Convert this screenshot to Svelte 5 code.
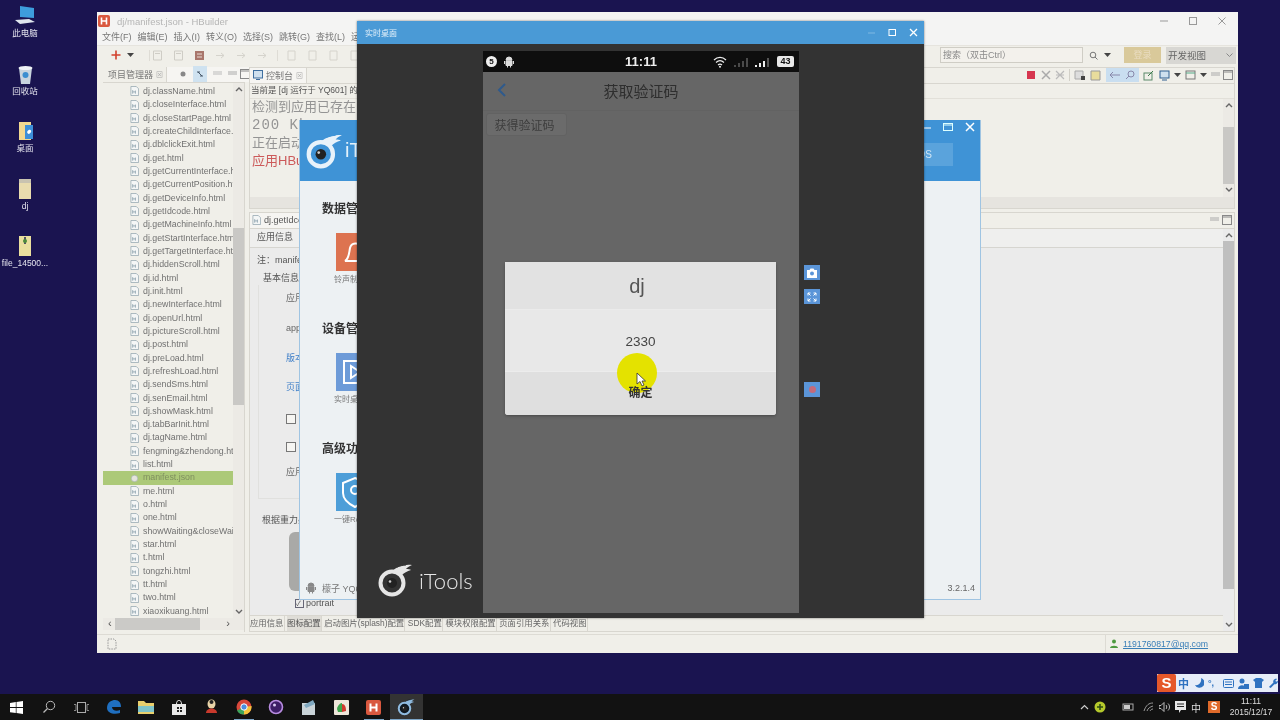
<script>
	const shortcuts = [
		{ label: '此电脑', kind: 'pc' },
		{ label: '回收站', kind: 'bin' },
		{ label: '桌面', kind: 'desk' },
		{ label: 'dj', kind: 'folder' },
		{ label: 'file_14500...', kind: 'zip' }
	];

	const files = [
		'dj.className.html', 'dj.closeInterface.html', 'dj.closeStartPage.html', 'dj.createChildInterface.html',
		'dj.dblclickExit.html', 'dj.get.html', 'dj.getCurrentInterface.html', 'dj.getCurrentPosition.html',
		'dj.getDeviceInfo.html', 'dj.getIdcode.html', 'dj.getMachineInfo.html', 'dj.getStartInterface.html',
		'dj.getTargetInterface.html', 'dj.hiddenScroll.html', 'dj.id.html', 'dj.init.html',
		'dj.newInterface.html', 'dj.openUrl.html', 'dj.pictureScroll.html', 'dj.post.html',
		'dj.preLoad.html', 'dj.refreshLoad.html', 'dj.sendSms.html', 'dj.senEmail.html',
		'dj.showMask.html', 'dj.tabBarInit.html', 'dj.tagName.html', 'fengming&zhendong.html',
		'list.html', 'manifest.json', 'me.html', 'o.html', 'one.html', 'showWaiting&closeWaiting.html',
		'star.html', 't.html', 'tongzhi.html', 'tt.html', 'two.html', 'xiaoxikuang.html'
	];

	const menus = ['文件(F)', '编辑(E)', '插入(I)', '转义(O)', '选择(S)', '跳转(G)', '查找(L)', '运行(R)'];
	const bottomTabs = ['应用信息', '图标配置', '启动图片(splash)配置', 'SDK配置', '模块权限配置', '页面引用关系', '代码视图'];
	const sections = [
		{ title: '数据管理', caption: '铃声制作', kind: 'bell' },
		{ title: '设备管理', caption: '实时桌面', kind: 'play' },
		{ title: '高级功能', caption: '一键Root', kind: 'shield' }
	];
</script>

{#snippet fileIcon(json)}
	<svg class="file-icon" viewBox="0 0 10 11">
		{#if json}
			<circle cx="5" cy="6" r="3.6" fill="#e4e4dc" stroke="#9aa" stroke-width=".6" />
		{:else}
			<path d="M1 .5h6l2.500 2.500v7.500h-8.500z" fill="#f4f6f6" stroke="#8fa3ad" stroke-width=".8" />
			<path d="M3 4.500v4M3 6.500h3M6 5v3.500" stroke="#7f97a5" stroke-width=".8" fill="none" />
		{/if}
	</svg>
{/snippet}

{#snippet logo(size, ring, iris)}
	<svg width={size} height={size} viewBox="0 0 36 36">
		<circle cx="15" cy="21" r="11.500" fill={iris} stroke={ring} stroke-width="4" />
		<circle cx="15" cy="21" r="5" fill="#222" />
		<circle cx="13" cy="19.500" r="1.300" fill="#ccc" />
		<path d="M15 9c6-5 13-7 20-6-3 1-5 3-6 4 2 0 4 0 5 1-4 1-7 3-9 5-2-2-6-4-10-4z" fill={ring} />
		<path d="M20 5c3-1 6-2 9-2" stroke={iris} stroke-width="1" fill="none" />
	</svg>
{/snippet}

{#snippet scrollV(thumbClass)}
	<div class="scroll-v">
		<svg class="arrow" viewBox="0 0 8 6"><path d="M1 5l3-3 3 3" fill="none" stroke="#666" stroke-width="1.400" /></svg>
		<div class="track"><div class="thumb {thumbClass}"></div></div>
		<svg class="arrow" viewBox="0 0 8 6"><path d="M1 1l3 3 3-3" fill="none" stroke="#666" stroke-width="1.400" /></svg>
	</div>
{/snippet}

{#snippet viewButtons()}
	<span class="view-buttons">
		<svg width="9" height="6" viewBox="0 0 9 6"><path d="M0 1h9M0 3h9" stroke="#aaa" /></svg>
		<svg width="10" height="10" viewBox="0 0 10 10"><rect x=".5" y=".5" width="9" height="9" fill="none" stroke="#888" /><path d="M0 2h10" stroke="#888" /></svg>
	</span>
{/snippet}

<div class="screen">
	<div class="shortcuts">
		{#each shortcuts as item}
			<div class="shortcut">
				<svg width="24" height="22" viewBox="0 0 24 22">
					{#if item.kind === 'pc'}
						<path d="M7 1l14 2v10l-14-1z" fill="#3d9ddc" />
						<path d="M2 15l14-1 6 3-15 2z" fill="#dfe6ee" />
					{:else if item.kind === 'bin'}
						<path d="M6 5h13l-2 16h-9z" fill="#c8d4de" />
						<ellipse cx="12.500" cy="5" rx="7" ry="2" fill="#eef2f5" />
						<circle cx="12.500" cy="12" r="3" fill="#3b8ed0" />
					{:else if item.kind === 'desk'}
						<path d="M6 2h12v18h-12z" fill="#f2d890" />
						<path d="M12 5h8v14h-8z" fill="#3d8fd8" />
						<path d="M14 12c2-4 5-2 4 0s-3 3-4 0z" fill="#fff" />
					{:else if item.kind === 'folder'}
						<path d="M6 1h12v20h-12z" fill="#e9dcae" />
						<path d="M6 1h12v4h-12z" fill="#c9c3b0" />
					{:else}
						<path d="M6 1h12v20h-12z" fill="#eadf9e" />
						<path d="M11 2h2v7h-2z" fill="#556" />
						<circle cx="12" cy="6" r="2" fill="#4c8a3c" />
					{/if}
				</svg>
				<span>{item.label}</span>
			</div>
		{/each}
	</div>

	<div class="window hbuilder">
		<div class="hb-title">
			<svg width="12" height="12" viewBox="0 0 12 12"><rect width="12" height="12" rx="2" fill="#d9583f" /><path d="M3.500 2.500v7M8.500 2.500v7M3.500 6h5" stroke="#fff" stroke-width="1.600" /></svg>
			<span class="hb-name">dj/manifest.json - HBuilder</span>
			<span class="controls">
				<svg width="10" height="10" viewBox="0 0 10 10"><path d="M1 5h8" stroke="#999" /></svg>
				<svg width="10" height="10" viewBox="0 0 10 10"><rect x="1.500" y="1.500" width="7" height="7" fill="none" stroke="#999" /></svg>
				<svg width="10" height="10" viewBox="0 0 10 10"><path d="M1.500 1.500l7 7M8.500 1.500l-7 7" stroke="#999" /></svg>
			</span>
		</div>

		<div class="hb-menu">
			{#each menus as m}<span>{m}</span>{/each}
		</div>

		<div class="hb-tools">
			<svg class="plus" width="10" height="10" viewBox="0 0 10 10"><path d="M5 .5v9M.5 5h9" stroke="#d2402c" stroke-width="1.600" /></svg>
			<svg class="caret" width="7" height="4" viewBox="0 0 7 4"><path d="M0 0h7l-3.500 4z" fill="#444" /></svg>
			<span class="tool-group">
				{#each [0, 1, 3, 4, 5, 6] as n}
					<svg width="11" height="11" viewBox="0 0 11 11">
						{#if n < 2}
							<path d="M1.500 1h8v9h-8zM3 3.500h5" fill="none" stroke="#cfcdc6" />
						{:else if n === 3}
							<rect x="1" y="1" width="9" height="9" fill="#a9766c" /><path d="M3 4h5M3 7h5" stroke="#e8dcd4" />
						{:else}
							<path d="M1 5.500h8M6 3l3 2.500-3 2.500" fill="none" stroke="#d5d3cc" />
						{/if}
					</svg>
				{/each}
			</span>
			<span class="tool-group second">
				{#each [0, 1, 2, 3] as n}
					<svg width="11" height="11" viewBox="0 0 11 11"><path d="M2 1h7v9h-7z" fill="none" stroke="#d5d3cc" /></svg>
				{/each}
			</span>
			<span class="search-box">搜索（双击Ctrl）</span>
			<svg class="q" width="9" height="9" viewBox="0 0 9 9"><circle cx="4" cy="4" r="2.800" fill="none" stroke="#777" /><path d="M6 6l2.500 2.500" stroke="#777" /></svg>
			<svg class="caret" width="7" height="4" viewBox="0 0 7 4"><path d="M0 0h7l-3.500 4z" fill="#444" /></svg>
			<span class="login">登录</span>
			<span class="view-select">开发视图
				<svg width="7" height="4" viewBox="0 0 7 4"><path d="M.5.500l3 3 3-3" fill="none" stroke="#888" /></svg>
			</span>
		</div>

		<div class="workspace">
			<aside class="project">
				<div class="tab-row">
					<span class="tab-name">项目管理器 <small>⊠</small></span>
					<span class="tab-rest">
						<svg width="8" height="8" viewBox="0 0 8 8"><circle cx="4" cy="4" r="2.500" fill="#888" /></svg>
						<span class="linked"><svg width="8" height="6" viewBox="0 0 8 6"><path d="M1 1h3M4 5h3M2 1l4 4" stroke="#456" /></svg></span>
						<svg width="9" height="6" viewBox="0 0 9 6"><path d="M0 1h9M0 3h9" stroke="#bbb" /></svg>
						{@render viewButtons()}
					</span>
				</div>
				<div class="tree-wrap">
					<ul class="tree">
						{#each files as f}
							<li class:selected={f === 'manifest.json'}>
								{@render fileIcon(f === 'manifest.json')}
								<span>{f}</span>
							</li>
						{/each}
					</ul>
					{@render scrollV('tree-thumb')}
				</div>
				<div class="scroll-h">
					<span>‹</span>
					<div class="h-thumb"></div>
					<span>›</span>
				</div>
			</aside>

			<section class="center">
				<div class="panel console">
					<div class="tab-row">
						<span class="tab-name console-tab">
							<svg width="10" height="10" viewBox="0 0 10 10"><rect x=".5" y=".5" width="9" height="7.500" fill="#cfe0ee" stroke="#3f6f9f" /><path d="M3 9.500h4" stroke="#3f6f9f" /></svg>
							控制台 <small>⊠</small>
						</span>
						<span class="console-tools">
							<i class="stop"></i>
							<svg width="10" height="10" viewBox="0 0 10 10"><path d="M1 1l8 8M9 1l-8 8" stroke="#aaa" stroke-width="1.500" /></svg>
							<svg width="10" height="10" viewBox="0 0 10 10"><path d="M1 1l8 8M9 1l-8 8M1 5h8" stroke="#bbb" stroke-width="1.200" /></svg>
							<b></b>
							<svg width="12" height="11" viewBox="0 0 12 11"><path d="M1 1h8v8h-8z" fill="#ddd" stroke="#aaa" /><rect x="7" y="6" width="4" height="4" fill="#444" /></svg>
							<svg width="12" height="11" viewBox="0 0 12 11"><path d="M1 1h9v9h-9z" fill="#e8dc9c" stroke="#999" /></svg>
							<span class="toggled">
								<svg width="12" height="10" viewBox="0 0 12 10"><path d="M1 5h10M4 2l-3 3 3 3" fill="none" stroke="#88a" /></svg>
								<svg width="12" height="10" viewBox="0 0 12 10"><circle cx="7" cy="4" r="3" fill="none" stroke="#88a" /><path d="M2 9l3-3" stroke="#88a" /></svg>
							</span>
							<svg width="12" height="11" viewBox="0 0 12 11"><rect x="1" y="3" width="8" height="7" fill="none" stroke="#5a8a6a" /><path d="M5 6l5-5" stroke="#3a7a4a" /></svg>
							<svg width="11" height="11" viewBox="0 0 11 11"><rect x="1" y="1" width="9" height="7" fill="#cfe0ee" stroke="#2f5f8f" /><path d="M3 10h5" stroke="#2f5f8f" /></svg>
							<svg width="7" height="4" viewBox="0 0 7 4"><path d="M0 0h7l-3.500 4z" fill="#444" /></svg>
							<svg width="11" height="10" viewBox="0 0 11 10"><rect x="1" y="1" width="9" height="8" fill="none" stroke="#777" /><path d="M1 3h9" stroke="#5a8" /></svg>
							<svg width="7" height="4" viewBox="0 0 7 4"><path d="M0 0h7l-3.500 4z" fill="#444" /></svg>
							{@render viewButtons()}
						</span>
					</div>
					<div class="console-info">当前是 [dj 运行于 YQ601] 的手机端日志输出</div>
					<div class="console-main">
						<div class="console-lines">
							<p>检测到应用已存在，覆盖安装</p>
							<p class="mono">200 Kb</p>
							<p>正在启动应用</p>
							<p class="red">应用HBuilder已启动</p>
						</div>
						{@render scrollV('console-thumb')}
					</div>
					<div class="console-hbar"></div>
				</div>

				<div class="panel editor">
					<div class="tab-row editor-tabs">
						<span class="tab-name editor-tab">{@render fileIcon(false)} dj.getIdcode.html</span>
						<span class="tab-end">{@render viewButtons()}</span>
					</div>
					<div class="editor-main">
						<div class="form">
							<div class="form-head">应用信息</div>
							<div class="form-note">注：manifest.json 文件</div>
							<div class="legend">基本信息</div>
							<div class="fieldset">
								<span>应用名称</span>
								<span>appid</span>
								<span class="link">版本号</span>
								<span class="link">页面入口</span>
								<span class="check"><i></i>全屏</span>
								<span class="check"><i></i>延迟</span>
								<span>应用描述</span>
							</div>
							<div class="gravity">根据重力感应</div>
							<div class="phone-mock"></div>
							<div class="portrait"><i>✓</i>portrait</div>
							<div class="form-tabs">
								{#each bottomTabs as t, i}
									<span class:active={i === 1}>{t}</span>
								{/each}
							</div>
						</div>
						{@render scrollV('editor-thumb')}
					</div>
				</div>
			</section>
		</div>

		<div class="hb-status">
			<svg width="10" height="12" viewBox="0 0 10 12"><path d="M1 1h6l2 2v8h-8z" fill="none" stroke="#999" stroke-dasharray="1.500 1" /></svg>
			<span class="account">
				<svg width="8" height="9" viewBox="0 0 8 9"><circle cx="4" cy="2.500" r="2" fill="#4d9a3f" /><path d="M0 9c0-3 8-3 8 0z" fill="#4d9a3f" /></svg>
				<u>1191760817@qq.com</u>
			</span>
		</div>
	</div>

	<div class="window itools">
		<header class="it-head">
			{@render logo(38, '#e8f2fa', '#3d92d6')}
			<span class="it-word">iTools</span>
			<span class="it-btn">iOS</span>
			<span class="it-controls">
				<svg width="10" height="10" viewBox="0 0 10 10"><path d="M0 6h10" stroke="#fff" /></svg>
				<svg width="10" height="10" viewBox="0 0 10 10"><rect x=".5" y="1.500" width="9" height="7" fill="none" stroke="#dff" /><path d="M0 3h10" stroke="#dff" /></svg>
				<svg width="10" height="10" viewBox="0 0 10 10"><path d="M1 1l8 8M9 1l-8 8" stroke="#fff" stroke-width="1.500" /></svg>
			</span>
		</header>
		<div class="it-body">
			{#each sections as s}
				<section class="it-section">
					<h3>{s.title}</h3>
					<div class="it-tile {s.kind}">
						<svg width="38" height="38" viewBox="0 0 38 38">
							{#if s.kind === 'bell'}
								<path d="M9 28c4-2 4-8 5-13s9-7 12 0 1 11 5 13z" fill="none" stroke="#fff" stroke-width="2" />
							{:else if s.kind === 'play'}
								<rect x="8" y="8" width="24" height="22" fill="none" stroke="#fff" stroke-width="2" />
								<path d="M15 13l9 6-9 6z" fill="none" stroke="#fff" stroke-width="2" />
							{:else}
								<path d="M19 5l12 5v10c0 7-6 11-12 14-6-3-12-7-12-14v-10z" fill="none" stroke="#fff" stroke-width="2" />
								<circle cx="19" cy="17" r="4" fill="none" stroke="#fff" stroke-width="2" />
							{/if}
						</svg>
					</div>
					<p>{s.caption}</p>
				</section>
			{/each}
		</div>
		<footer class="it-foot">
			<svg width="12" height="12" viewBox="0 0 12 12"><path d="M3 4a3 3 0 0 1 6 0zM3 4.800h6v4.700h-6zM1.500 5v3M10.500 5v3M4.500 9.500v2M7.500 9.500v2" stroke="#888" fill="#888" /></svg>
			<span>檬子 YQ601</span>
			<span class="version">3.2.1.4</span>
		</footer>
	</div>

	<div class="window live">
		<header class="live-head">
			<span>实时桌面</span>
			<span class="live-controls">
				<svg width="9" height="9" viewBox="0 0 9 9"><path d="M1 5h7" stroke="#7fb8e2" /></svg>
				<svg width="9" height="9" viewBox="0 0 9 9"><rect x="1" y="1.500" width="6.500" height="6" fill="none" stroke="#fff" /></svg>
				<svg width="9" height="9" viewBox="0 0 9 9"><path d="M1 1l7 7M8 1l-7 7" stroke="#fff" stroke-width="1.300" /></svg>
			</span>
		</header>
		<div class="live-body">
			<div class="live-brand">
				{@render logo(36, '#e6e6e6', '#333')}
				<span>iTools</span>
			</div>

			<div class="phone">
				<div class="status">
					<span class="badge">5</span>
					<svg width="12" height="12" viewBox="0 0 12 12"><path d="M3 4a3 3 0 0 1 6 0zM3 4.800h6v4.700h-6zM1.500 5v3M10.500 5v3M4.500 9.500v2M7.500 9.500v2" stroke="#ddd" fill="#ddd" /></svg>
					<span class="clock">11:11</span>
					<svg width="14" height="12" viewBox="0 0 14 12"><path d="M1 4c3.500-3.500 8.500-3.500 12 0M3 6.500c2.500-2.200 5.500-2.200 8 0M5 9c1.200-1 2.800-1 4 0" fill="none" stroke="#eee" stroke-width="1.200" /><circle cx="7" cy="10.800" r="1" fill="#eee" /></svg>
					<svg class="bars dim" width="18" height="10" viewBox="0 0 18 10"><path d="M1 10v-2h2v2zM5 10v-4h2v4zM9 10v-6h2v6zM13 10v-9h2v9z" fill="#4a4a4a" /></svg>
					<svg class="bars" width="18" height="10" viewBox="0 0 18 10"><path d="M1 10v-2h2v2zM5 10v-4h2v4zM9 10v-6h2v6z" fill="#eee" /><path d="M13 10v-9h2v9z" fill="#555" /></svg>
					<span class="battery">43</span>
				</div>
				<div class="app">
					<div class="app-bar">
						<svg width="12" height="14" viewBox="0 0 12 14"><path d="M9 1l-6 6 6 6" fill="none" stroke="#2f5a8c" stroke-width="2" /></svg>
						<h1>获取验证码</h1>
					</div>
					<div class="app-content">
						<button class="get-code">获得验证码</button>
					</div>
					<div class="mask">
						<div class="dialog">
							<div class="dlg-title">dj</div>
							<div class="dlg-msg">2330</div>
							<div class="dlg-btn"><span>确定</span></div>
							<div class="pointer"></div>
							<svg class="arrow-cursor" width="10" height="15" viewBox="0 0 10 15"><path d="M1 1v11l3-2.500 2 4.500 2-1-2-4h3.500z" fill="#fff" stroke="#333" stroke-width=".8" /></svg>
						</div>
					</div>
				</div>
			</div>

			<div class="side-tools">
				<span>
					<svg width="12" height="10" viewBox="0 0 12 10"><path d="M1 2h2.500l1-1.500h3l1 1.500h2.500v8h-10z" fill="#fff" /><circle cx="6" cy="5.500" r="2" fill="#5b95d8" /></svg>
				</span>
				<span>
					<svg width="10" height="10" viewBox="0 0 10 10"><path d="M1 1l2.500 2.500M9 1l-2.500 2.500M1 9l2.500-2.500M9 9l-2.500-2.500M1 1h2.500M1 1v2.500M9 1h-2.500M9 1v2.500M1 9h2.500M1 9v-2.500M9 9h-2.500M9 9v-2.500" stroke="#fff" /></svg>
				</span>
				<span class="rec"><i></i></span>
			</div>
		</div>
	</div>

	<div class="ime">
		<span class="ime-s">S</span>
		<span class="ime-zh">中</span>
		<svg class="moon" width="9" height="10" viewBox="0 0 9 10"><path d="M6 0a5 5 0 1 1-6 7c4 1 7-3 6-7z" fill="#2f72c0" /></svg>
		<span class="ime-dots">°,</span>
		<svg class="kb" width="11" height="9" viewBox="0 0 11 9"><rect x=".5" y=".5" width="10" height="8" rx="1" fill="none" stroke="#2f72c0" /><path d="M2 3h7M2 5.500h7" stroke="#2f72c0" /></svg>
		<svg width="11" height="11" viewBox="0 0 11 11"><circle cx="4" cy="3" r="2.500" fill="#2f72c0" /><path d="M0 11c0-5 8-5 8 0z" fill="#2f72c0" /><rect x="6" y="6" width="5" height="5" fill="#2f72c0" /></svg>
		<svg width="11" height="10" viewBox="0 0 11 10"><path d="M0 2l3-2h5l3 2-2 2v6h-7v-6z" fill="#2f72c0" /></svg>
		<svg width="10" height="10" viewBox="0 0 11 11"><path d="M1 10l5-5c-1-2 1-5 4-4l-2 2 1 1 2-1c0 3-2 4-4 4l-4 4z" fill="#2f72c0" /></svg>
	</div>

	<footer class="taskbar">
		<span class="task"><svg width="13" height="13" viewBox="0 0 13 13"><path d="M0 2l5.800-.9v5h-5.800zM6.500 1l6.500-1v6h-6.500zM0 7h5.800v5l-5.800-.8zM6.500 7h6.500v6l-6.500-1z" fill="#fff" /></svg></span>
		<span class="task"><svg width="14" height="14" viewBox="0 0 14 14"><circle cx="8.500" cy="5.500" r="4.200" fill="none" stroke="#bbb" /><path d="M5.500 8.500l-4 4" stroke="#bbb" stroke-width="1.300" /></svg></span>
		<span class="task"><svg width="15" height="11" viewBox="0 0 15 11"><rect x="3.500" y=".5" width="8" height="10" fill="none" stroke="#aaa" /><path d="M0 2.500h2v6h-2M15 2.500h-2v6h2" fill="none" stroke="#888" /></svg></span>
		<span class="task"><svg width="16" height="16" viewBox="0 0 16 16"><path d="M1 9c0-6 5-8 8-8 4 0 6 3 6 7h-9c0 3 4 5 8 3v3c-6 2-13 0-13-5z" fill="#1f6fc0" /></svg></span>
		<span class="task"><svg width="16" height="14" viewBox="0 0 16 14"><path d="M0 1h6l2 2h8v11h-16z" fill="#e9cf6c" /><rect x="0" y="6" width="16" height="6" fill="#7fc4c9" /></svg></span>
		<span class="task"><svg width="14" height="15" viewBox="0 0 14 15"><rect y="4" width="14" height="11" fill="#e9e9e9" /><path d="M4.500 4c0-5 5-5 5 0" fill="none" stroke="#e9e9e9" /><path d="M5 7h2v2h-2zM8 7h2v2h-2zM5 10h2v2h-2zM8 10h2v2h-2z" fill="#222" /></svg></span>
		<span class="task"><svg width="13" height="16" viewBox="0 0 13 16"><ellipse cx="6.500" cy="5" rx="4" ry="4.500" fill="#e8d4a8" /><path d="M1 14c0-6 11-6 11 0z" fill="#c9392c" /><circle cx="6.500" cy="3" r="2" fill="#222" /></svg></span>
		<span class="task running"><svg width="16" height="16" viewBox="0 0 16 16"><circle cx="8" cy="8" r="7.500" fill="#d9483b" /><path d="M8 8l-7 3.500a7.500 7.500 0 0 0 7 4z" fill="#3ba55c" /><path d="M8 8l7.500-1a7.500 7.500 0 0 1-7.500 8.500z" fill="#f2c43c" /><circle cx="8" cy="8" r="3.200" fill="#4a8fe0" stroke="#fff" /></svg></span>
		<span class="task"><svg width="16" height="16" viewBox="0 0 16 16"><circle cx="8" cy="8" r="6.500" fill="#3d1d66" stroke="#b88ce0" stroke-width="1.600" /><circle cx="6.500" cy="6" r="1.500" fill="#d8c8f0" /></svg></span>
		<span class="task"><svg width="15" height="16" viewBox="0 0 15 16"><path d="M1 4h13v12h-13z" fill="#c9d3d8" /><path d="M3 6l9-5 2 4-9 4z" fill="#7fa8c0" /></svg></span>
		<span class="task"><svg width="15" height="15" viewBox="0 0 15 15"><rect width="15" height="15" rx="1" fill="#efe6da" /><path d="M3 9c1-5 4-6 5-6v9h-4z" fill="#3fa34d" /><path d="M8 4c3 0 4 3 4 7l-4 1z" fill="#d0392c" /></svg></span>
		<span class="task running"><svg width="15" height="15" viewBox="0 0 15 15"><rect width="15" height="15" rx="2" fill="#d9583f" /><path d="M4.500 3.500v8M10.500 3.500v8M4.500 7.500h6" stroke="#fff" stroke-width="2" /></svg></span>
		<span class="task current">{@render logo(18, '#8fbbe0', '#101820')}</span>

		<span class="tray">
			<svg width="9" height="6" viewBox="0 0 9 6"><path d="M1 5l3.500-3.500 3.500 3.500" fill="none" stroke="#ccc" stroke-width="1.200" /></svg>
			<svg width="12" height="12" viewBox="0 0 12 12"><circle cx="6" cy="6" r="5.500" fill="#b5c92c" /><path d="M6 3v6M3 6h6" stroke="#2a4a10" stroke-width="1.500" /></svg>
			<svg class="wide" width="12" height="8" viewBox="0 0 12 8"><rect x="1" y="1" width="10" height="6" fill="none" stroke="#aaa" /><rect x="2" y="2" width="6" height="4" fill="#ccc" /></svg>
			<svg width="11" height="10" viewBox="0 0 11 10"><path d="M1 9c2-6 5-8 9-8M4 9c1-3 3-4 6-5M7 9c.500-1 1.500-2 3-2" fill="none" stroke="#999" /></svg>
			<svg width="11" height="10" viewBox="0 0 11 10"><path d="M0 3.500h2l3-3v9l-3-3h-2z" fill="none" stroke="#bbb" /><path d="M7 3c1 1 1 3 0 4M9 1.500c2 2 2 5 0 7" fill="none" stroke="#bbb" /></svg>
			<svg width="11" height="12" viewBox="0 0 11 12"><path d="M0 0h11v9h-5l-2 3v-3h-4z" fill="#e8e8e8" /><path d="M2 3h7M2 5.500h7" stroke="#222" /></svg>
			<span class="tray-zh">中</span>
			<span class="tray-s">S</span>
			<span class="datetime"><span>11:11</span><span>2015/12/17</span></span>
		</span>
	</footer>
</div>

<style>
	:global(body) {
		margin: 0;
		background: #1a1450;
		overflow: hidden;
	}

	.screen {
		position: relative;
		width: 1280px;
		height: 720px;
		overflow: hidden;
		background: #1a1450;
		font-family: 'Liberation Sans', 'Noto Sans CJK SC', sans-serif;
		filter: blur(0.45px);
	}

	svg {
		display: block;
		flex: none;
	}

	/* desktop icons */
	.shortcuts {
		display: flex;
		flex-direction: column;
		width: 50px;
		padding-top: 5px;
	}

	.shortcut {
		height: 57.6px;
		display: flex;
		flex-direction: column;
		align-items: center;
		gap: 1px;
		color: #e4e4ee;
		font-size: 8.5px;
		line-height: 11px;
		white-space: nowrap;
	}

	.window {
		position: absolute;
	}

	/* hbuilder */
	.hbuilder {
		left: 97px;
		top: 12px;
		width: 1141px;
		height: 641px;
		background: #f0efe9;
		display: flex;
		flex-direction: column;
		color: #6a6a6a;
		font-size: 9px;
	}

	.hb-title {
		height: 17px;
		display: flex;
		align-items: center;
		padding: 1px 0 0 1px;
		gap: 6px;
		background: #f4f4f3;
	}

	.hb-name {
		color: #b5b5b5;
		font-size: 9.500px;
		margin-left: 1px;
	}

	.controls {
		margin-left: auto;
		display: flex;
		gap: 19px;
		padding-right: 11px;
	}

	.hb-menu {
		height: 16px;
		display: flex;
		align-items: center;
		gap: 6px;
		padding-left: 5px;
		color: #777;
		background: #f4f4f3;
		white-space: nowrap;
	}

	.hb-tools {
		height: 21px;
		display: flex;
		align-items: center;
		padding-left: 14px;
		border-top: 1px solid #e6e4de;
		box-sizing: border-box;
	}

	.plus {
		margin-right: 6px;
	}

	.tool-group {
		display: flex;
		gap: 10px;
		margin-left: 15px;
		padding-left: 2px;
		border-left: 1px solid #dedcd5;
	}

	.tool-group.second {
		margin-left: 9px;
		padding-left: 8px;
	}

	.search-box {
		margin-left: auto;
		width: 143px;
		height: 16px;
		box-sizing: border-box;
		border: 1px solid #cfcdc5;
		background: #f3f1ec;
		padding-left: 2px;
		line-height: 14px;
		color: #8a8a8a;
		font-size: 9px;
	}

	.q {
		margin: 0 6px;
	}

	.login {
		margin-left: 13px;
		width: 37px;
		height: 16px;
		background: #d9c99a;
		text-align: center;
		line-height: 16px;
		color: #e9dcc0;
	}

	.view-select {
		margin: 0 2px 0 5px;
		width: 70px;
		height: 17px;
		box-sizing: border-box;
		background: #d8d7d3;
		display: flex;
		align-items: center;
		justify-content: space-between;
		padding: 0 3px 0 2px;
		color: #666;
		font-size: 9.500px;
	}

	.workspace {
		height: 567px;
		display: flex;
		gap: 4px;
		padding: 0 3px 0 6px;
	}

	.tab-row {
		height: 15px;
		display: flex;
		align-items: stretch;
		border-bottom: 1px solid #d8d6cf;
		flex: none;
	}

	.tab-name {
		display: flex;
		align-items: center;
		gap: 3px;
		padding: 0 3px 0 5px;
		white-space: nowrap;
		color: #777;
	}

	.tab-name small {
		font-size: 7px;
		color: #aaa;
	}

	.project {
		width: 141px;
		margin-top: 2px;
		display: flex;
		flex-direction: column;
		border-right: 1px solid #d8d6cf;
	}

	.tab-rest {
		flex: 1;
		display: flex;
		align-items: center;
		gap: 6px;
		padding-left: 12px;
		background: #f6f5f2;
		border-left: 1px solid #d8d6cf;
	}

	.linked {
		padding: 5px 3px;
		background: #cfe2f0;
	}

	.view-buttons {
		display: flex;
		align-items: center;
		gap: 3px;
	}

	.tree-wrap {
		height: 535px;
		display: flex;
	}

	.tree {
		list-style: none;
		margin: 0;
		padding: 2px 0 0;
		flex: 1;
		min-width: 0;
		overflow: hidden;
	}

	.tree li {
		height: 13.34px;
		display: flex;
		align-items: center;
		gap: 4px;
		padding-left: 27px;
		line-height: 13px;
		white-space: nowrap;
		color: #717171;
		font-size: 8.800px;
	}

	.tree li.selected {
		background: #acc978;
		color: #7f8f5f;
	}

	.file-icon {
		width: 9px;
		height: 10px;
	}

	.scroll-v {
		width: 11px;
		flex: none;
		display: flex;
		flex-direction: column;
		align-items: center;
		background: #eceae5;
	}

	.arrow {
		width: 8px;
		height: 6px;
		margin: 3px 0;
	}

	.track {
		flex: 1;
		width: 100%;
	}

	.thumb {
		background: #c9c8c5;
		width: 100%;
	}

	.tree-thumb {
		margin-top: 133px;
		height: 177px;
	}

	.console-thumb {
		margin-top: 16px;
		height: 57px;
	}

	.console .scroll-v {
		padding-bottom: 5px;
	}

	.editor-thumb {
		height: 348px;
		background: #bfbfbf;
	}

	.editor .scroll-v {
		background: #ebebeb;
	}

	.scroll-h {
		height: 12px;
		display: flex;
		align-items: center;
		padding: 0 5px;
		background: #eceae5;
		color: #555;
		font-size: 11px;
		line-height: 11px;
	}

	.h-thumb {
		width: 85px;
		height: 12px;
		margin-left: 3px;
		background: #cbcac7;
	}

	.scroll-h span:last-child {
		margin-left: auto;
		padding-right: 9px;
	}

	.center {
		flex: 1;
		min-width: 0;
		display: flex;
		flex-direction: column;
		margin-top: 2px;
		gap: 3px;
	}

	.panel {
		border: 1px solid #d8d6cf;
		display: flex;
		flex-direction: column;
		overflow: hidden;
	}

	.console {
		height: 142px;
		box-sizing: border-box;
		flex: none;
	}

	.console-tab {
		background: #f6f5f2;
		border-right: 1px solid #d8d6cf;
		padding-left: 3px;
	}

	.console-tools {
		flex: 1;
		display: flex;
		align-items: center;
		justify-content: flex-end;
		gap: 4px;
		padding-right: 1px;
	}

	.stop {
		width: 8px;
		height: 8px;
		background: #d6364f;
		margin-right: 2px;
	}

	.console-tools b {
		width: 1px;
		height: 12px;
		background: #d2d0c8;
	}

	.toggled {
		display: flex;
		gap: 3px;
		background: #c9def0;
		padding: 2px 3px;
	}

	.console-info {
		height: 14px;
		line-height: 13px;
		padding-left: 1px;
		white-space: nowrap;
		font-size: 8.500px;
		color: #555;
		border-bottom: 1px solid #e2e0d9;
		flex: none;
	}

	.console-main {
		flex: 1;
		min-height: 0;
		display: flex;
	}

	.console-lines {
		flex: 1;
		padding: 0 2px;
		margin-top: -1px;
		overflow: hidden;
	}

	.console-lines p {
		margin: 0;
		height: 18px;
		line-height: 18px;
		font-size: 13px;
		color: #949494;
		white-space: nowrap;
	}

	.console-lines .mono {
		font-family: 'Liberation Mono', monospace;
		font-size: 14px;
		letter-spacing: 1px;
	}

	.console-lines .red {
		color: #cc5a5a;
	}

	.console-hbar {
		height: 11px;
		background: #e6e4df;
		flex: none;
	}

	.editor {
		flex: 1;
		min-height: 0;
	}

	.editor-tab {
		gap: 3px;
		padding-left: 2px;
		color: #555;
		background: #f6f5f2;
	}

	.tab-end {
		margin-left: auto;
		display: flex;
		align-items: center;
		padding-right: 2px;
	}

	.editor-main {
		flex: 1;
		min-height: 0;
		display: flex;
	}

	.form {
		flex: 1;
		min-width: 0;
		display: flex;
		flex-direction: column;
		color: #666;
		background: #ebebeb;
	}

	.form-head {
		height: 18px;
		line-height: 17px;
		padding-left: 7px;
		border-bottom: 1px solid #d6d5d0;
		background: #efefee;
		flex: none;
		color: #555;
	}

	.form-note {
		padding-left: 7px;
		margin-top: 6px;
		line-height: 13px;
		color: #555;
	}

	.legend {
		padding-left: 13px;
		margin-top: 5px;
		line-height: 13px;
		color: #555;
	}

	/* only the left and bottom edges of the group box show in the reference */
	.fieldset {
		margin-left: 8px;
		width: 200px;
		height: 214px;
		border-left: 1px solid #e0e0de;
		border-bottom: 1px solid #e0e0de;
		box-sizing: border-box;
		display: grid;
		grid-template-rows: 19px 30px 30px 29px 32px 28px 25px;
		padding-left: 27px;
		align-items: end;
	}

	.fieldset > span {
		line-height: 12px;
		color: #666;
	}

	.fieldset .link {
		color: #3f7fc8;
	}

	.check {
		display: flex;
		align-items: center;
		gap: 3px;
	}

	.check i {
		width: 8px;
		height: 8px;
		border: 1px solid #777;
		background: #f6f5f2;
	}

	.gravity {
		padding-left: 12px;
		margin-top: 15px;
		line-height: 12px;
		color: #555;
	}

	.phone-mock {
		margin: 6px 0 0 39px;
		width: 60px;
		height: 59px;
		background: #a9a9a7;
		border-radius: 6px 0 0 6px;
	}

	.portrait {
		display: flex;
		align-items: center;
		gap: 2px;
		margin: 7px 0 0 45px;
		line-height: 11px;
		color: #555;
	}

	.portrait i {
		width: 7px;
		height: 7px;
		border: 1px solid #667;
		font-size: 7px;
		font-style: normal;
		line-height: 7px;
	}

	.form-tabs {
		display: flex;
		flex: 1;
		margin-top: 6px;
		gap: 2.600px;
		background: #efeee8;
		border-top: 1px solid #d8d6cf;
	}

	.form-tabs span {
		line-height: 15px;
		border-right: 1px solid #d8d6cf;
		white-space: nowrap;
		font-size: 8.400px;
		color: #666;
	}

	.form-tabs .active {
		background: #dfddd7;
		color: #555;
	}

	.hb-status {
		height: 20px;
		margin-top: 2px;
		display: flex;
		align-items: center;
		padding-left: 10px;
		border-top: 1px solid #dddbd4;
		box-sizing: border-box;
	}

	.account {
		margin-left: auto;
		width: 133px;
		height: 100%;
		display: flex;
		align-items: center;
		gap: 5px;
		padding-left: 4px;
		box-sizing: border-box;
		border-left: 1px solid #dddbd4;
		color: #3a7fb8;
		font-size: 8.700px;
	}

	/* itools window behind the live view */
	.itools {
		left: 299px;
		top: 120px;
		width: 682px;
		height: 480px;
		background: #edf1f3;
		box-sizing: border-box;
		border: 1px solid #9fc4e2;
		border-top: 0;
		display: flex;
		flex-direction: column;
	}

	.it-head {
		position: relative;
		height: 61px;
		background: #3f93d6;
		display: flex;
		align-items: center;
		padding-left: 5px;
		color: #e4f2fb;
		flex: none;
	}

	.it-word {
		font-size: 20px;
		margin-left: 2px;
	}

	.it-btn {
		margin-left: auto;
		margin-right: 27px;
		width: 60px;
		height: 23px;
		margin-top: 8px;
		background: #5aa3dc;
		color: #cfe5f5;
		font-size: 10px;
		line-height: 23px;
		text-align: right;
		padding-right: 21px;
		box-sizing: border-box;
	}

	.it-controls {
		position: absolute;
		right: 5px;
		top: 2px;
		display: flex;
		gap: 12px;
	}

	.it-body {
		flex: 1;
		padding-left: 22px;
		min-height: 0;
	}

	.it-section {
		height: 120px;
		padding-top: 21px;
		box-sizing: border-box;
	}

	.it-section h3 {
		margin: 0;
		font-size: 12px;
		line-height: 14px;
		color: #333;
	}

	.it-section p {
		margin: 3px 0 0 12px;
		font-size: 8px;
		line-height: 12px;
		color: #777;
		width: 60px;
	}

	.it-tile {
		margin: 17px 0 0 14px;
		width: 60px;
		height: 38px;
	}

	.bell {
		background: #dd7350;
	}

	.play {
		background: #6d9bd8;
	}

	.shield {
		background: #4d9ed8;
	}

	.it-foot {
		height: 20px;
		display: flex;
		align-items: center;
		gap: 5px;
		padding: 0 5px 2px 5px;
		box-sizing: border-box;
		font-size: 9px;
		color: #777;
		flex: none;
	}

	.version {
		margin-left: auto;
		color: #666;
	}

	/* live desktop window */
	.live {
		left: 357px;
		top: 21px;
		width: 567px;
		height: 597px;
		background: #333;
		display: flex;
		flex-direction: column;
		box-shadow: 0 0 2px rgba(0, 0, 0, 0.5);
	}

	.live-head {
		height: 23px;
		background: #4a9ad6;
		display: flex;
		align-items: center;
		padding-left: 8px;
		color: #e2f0fa;
		font-size: 8px;
		flex: none;
	}

	.live-controls {
		margin-left: auto;
		display: flex;
		gap: 12px;
		padding-right: 6px;
	}

	.live-body {
		flex: 1;
		min-height: 0;
		display: grid;
		grid-template-columns: 126px 316px 1fr;
		padding-top: 7px;
		box-sizing: border-box;
	}

	.live-brand {
		align-self: end;
		display: flex;
		align-items: center;
		gap: 6px;
		padding: 0 0 20px 20px;
		color: #e6e6e6;
		font-size: 22px;
		font-weight: 300;
		font-family: Lato, 'Liberation Sans', sans-serif;
		white-space: nowrap;
	}

	.phone {
		height: 562px;
		display: flex;
		flex-direction: column;
	}

	.status {
		height: 21px;
		background: #0e0e0e;
		display: flex;
		align-items: center;
		gap: 3px;
		padding: 0 5px 0 3px;
		flex: none;
		position: relative;
	}

	.badge {
		width: 11px;
		height: 11px;
		border-radius: 50%;
		background: #eee;
		color: #111;
		font-size: 8px;
		font-weight: bold;
		text-align: center;
		line-height: 11px;
		margin-right: 3px;
	}

	.clock {
		position: absolute;
		left: 0;
		right: 0;
		text-align: center;
		color: #eee;
		font-size: 13px;
		font-weight: bold;
	}

	.status > svg:nth-of-type(2) {
		margin-left: auto;
		margin-right: 3px;
	}

	.battery {
		margin-left: 2px;
		width: 17px;
		height: 11px;
		border-radius: 2px;
		background: #e8e8e8;
		color: #111;
		font-size: 9px;
		font-weight: bold;
		line-height: 11px;
		text-align: center;
	}

	.app {
		flex: 1;
		min-height: 0;
		background: #666;
		position: relative;
		display: flex;
		flex-direction: column;
	}

	.app-bar {
		height: 39px;
		flex: none;
		display: flex;
		align-items: center;
		justify-content: center;
		position: relative;
		padding-bottom: 2px;
		border-bottom: 1px solid #626262;
		box-sizing: border-box;
	}

	.app-bar svg {
		position: absolute;
		left: 13px;
		top: 11px;
	}

	.app-bar h1 {
		margin: 0;
		font-size: 15px;
		font-weight: 400;
		color: #2e2e2e;
	}

	.app-content {
		padding: 2px 0 0 3px;
	}

	.get-code {
		width: 81px;
		height: 23px;
		padding: 0 4px 0 0;
		font: 12px 'Liberation Sans', 'Noto Sans CJK SC', sans-serif;
		color: #3d3d3d;
		background: #6b6b6b;
		border: 1px solid #626262;
		border-radius: 3px;
	}

	.mask {
		position: absolute;
		inset: 0;
		padding: 190px 1px 0 0;
		display: flex;
		justify-content: center;
		align-items: flex-start;
	}

	.dialog {
		position: relative;
		width: 271px;
		height: 153px;
		background: #e8e8e8;
		border-radius: 3px;
		display: flex;
		flex-direction: column;
		align-items: center;
		box-shadow: 0 1px 3px rgba(0, 0, 0, 0.3);
		color: #444;
	}

	.dlg-title {
		width: 100%;
		height: 48px;
		line-height: 48px;
		padding-right: 7px;
		box-sizing: border-box;
		text-align: center;
		font-size: 20px;
		color: #555;
		background: #e2e2e2;
		border-bottom: 1px solid #ebebeb;
	}

	.dlg-msg {
		width: 100%;
		height: 62px;
		text-align: center;
		font-size: 13.500px;
		padding-top: 24px;
		box-sizing: border-box;
		line-height: 16px;
	}

	.dlg-btn {
		width: 100%;
		flex: 1;
		background: #dfdfdf;
		text-align: center;
		font-size: 12px;
		font-weight: bold;
		line-height: 43px;
		border-radius: 0 0 3px 3px;
		border-top: 1px solid #ececec;
		box-sizing: border-box;
		color: #333;
	}

	.dlg-btn span {
		position: relative;
		z-index: 1;
	}

	.pointer {
		position: absolute;
		left: 112px;
		top: 91px;
		width: 40px;
		height: 40px;
		border-radius: 50%;
		background: #e4e200;
	}

	.arrow-cursor {
		position: absolute;
		left: 131px;
		top: 110px;
	}

	.side-tools {
		display: flex;
		flex-direction: column;
		align-items: flex-start;
		padding: 214px 0 0 5px;
		gap: 9px;
	}

	.side-tools span {
		width: 16px;
		height: 15px;
		background: #5b95d8;
		display: flex;
		align-items: center;
		justify-content: center;
	}

	.side-tools .rec {
		margin-top: 69px;
	}

	.rec i {
		width: 7px;
		height: 7px;
		border-radius: 50%;
		background: #c56a7a;
	}

	/* input method bar */
	.ime {
		position: absolute;
		left: 1157px;
		top: 674px;
		width: 121px;
		height: 18px;
		background: #e6edf8;
		display: flex;
		align-items: center;
		gap: 4px;
		color: #2f72c0;
		font-size: 11px;
		font-weight: bold;
	}

	.ime-s {
		flex: none;
		width: 19px;
		height: 18px;
		border-radius: 2px;
		background: #e5582a;
		color: #fff;
		font-size: 15px;
		text-align: center;
		line-height: 18px;
		margin-right: -2px;
	}

	.moon {
		margin-left: 2px;
	}

	.ime-dots {
		font-size: 9px;
		width: 8px;
	}

	.kb {
		margin-left: 4px;
	}

	/* taskbar */
	.taskbar {
		position: absolute;
		left: 0;
		right: 0;
		bottom: 0;
		height: 26px;
		background: #121212;
		display: flex;
		align-items: stretch;
	}

	.task {
		width: 32.500px;
		display: flex;
		align-items: center;
		justify-content: center;
		box-sizing: border-box;
	}

	.task.running {
		background: linear-gradient(#7da6c8, #7da6c8) center bottom / 20px 1px no-repeat;
	}

	.task.current {
		background: #333;
		border-bottom: 1px solid #7da6c8;
	}

	.tray {
		margin-left: auto;
		display: flex;
		align-items: center;
		gap: 5px;
		color: #ddd;
		padding-right: 3px;
	}

	.tray .wide {
		margin-left: 11px;
		margin-right: 4px;
	}

	.tray-zh {
		font-size: 10px;
	}

	.tray-s {
		width: 12px;
		height: 12px;
		background: #e06a2a;
		color: #fff;
		font-size: 10px;
		font-weight: bold;
		line-height: 12px;
		text-align: center;
		margin-left: 2px;
	}

	.datetime {
		display: flex;
		flex-direction: column;
		align-items: center;
		font-size: 8.500px;
		line-height: 11px;
		width: 52px;
	}
</style>
